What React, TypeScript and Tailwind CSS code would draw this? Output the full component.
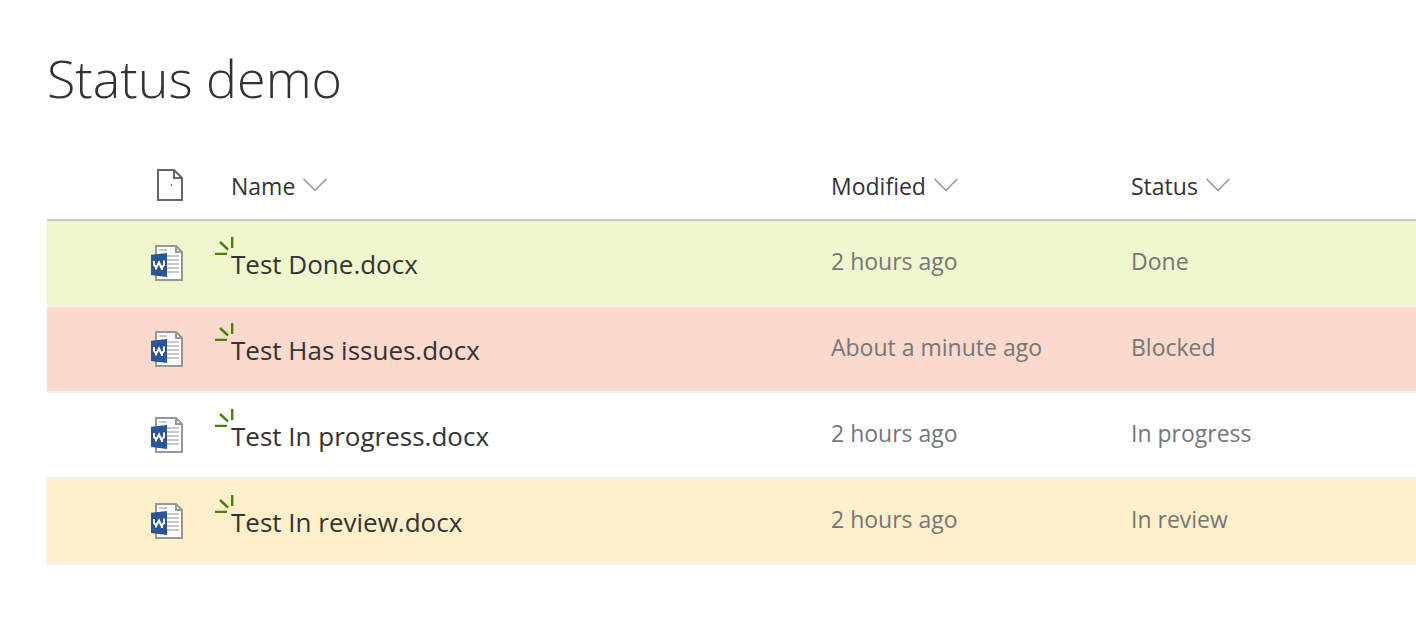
type Tone = 'done' | 'blocked' | 'plain' | 'review';

type Item = { name: string; modified: string; status: string; tone: Tone };

const items: Item[] = [
  { name: 'Test Done.docx', modified: '2 hours ago', status: 'Done', tone: 'done' },
  { name: 'Test Has issues.docx', modified: 'About a minute ago', status: 'Blocked', tone: 'blocked' },
  { name: 'Test In progress.docx', modified: '2 hours ago', status: 'In progress', tone: 'plain' },
  { name: 'Test In review.docx', modified: '2 hours ago', status: 'In review', tone: 'review' },
];

const toneClass: Record<Tone, string> = {
  done: 'bg-[#f0f7cf]',
  blocked: 'bg-[#fbd9cd]',
  plain: 'bg-white',
  review: 'bg-[#fff0cc]',
};

function FileTypeIcon() {
  return (
    <svg className="block" width="28" height="34" viewBox="0 0 28 34" fill="none" aria-hidden="true">
      <path d="M2 2H18L26 10V32H2Z" stroke="#666666" strokeWidth="2" />
      <path d="M18 2V10H26" stroke="#666666" strokeWidth="2" />
      <rect x="15" y="16" width="1" height="2" fill="#9a5a28" />
    </svg>
  );
}

function WordIcon() {
  return (
    <svg className="block" width="32" height="36" viewBox="0 0 32 36" fill="none" aria-hidden="true">
      <path d="M5 1H25L31 7V35H5Z" fill="#ffffff" stroke="#979797" strokeWidth="2" />
      <path d="M25 1V7H31" stroke="#979797" strokeWidth="2" />
      <path d="M8 5H16M16 11H28M16 15H28M16 19H28M16 23H28M16 27H28" stroke="#c8c8c8" strokeWidth="2" />
      <path d="M0 9.8L16 8V32L0 30Z" fill="#2a5699" />
      <path d="M3 16V20L5 22V24.5M5 23L8 17.5L10.5 23M11 25V22L13 20V15.5" stroke="#ffffff" strokeWidth="2" />
    </svg>
  );
}

function NewGlyph() {
  return (
    <svg className="absolute top-4 -left-4" width="19" height="18" viewBox="0 0 19 18" fill="none" aria-hidden="true">
      <path d="M17.2 0V11M5 5L13 12.5M0 17H12" stroke="#498205" strokeWidth="2.4" />
    </svg>
  );
}

function Chevron() {
  return (
    <svg className="-mt-0.5" width="24" height="14" viewBox="0 0 24 14" fill="none" aria-hidden="true">
      <path d="M0.5 0.8L12 12.3L23.5 0.8" stroke="#a0a0a0" strokeWidth="1.7" />
    </svg>
  );
}

function ColumnHeader({ label }: { label: string }) {
  return (
    <th scope="col" className="p-0 text-left align-middle font-normal">
      <button type="button" className="flex items-center gap-2 text-[23px] leading-8">
        {label}
        <Chevron />
      </button>
    </th>
  );
}

export default function App() {
  return (
    <main className="min-h-screen bg-white pt-11 pl-[47px] font-['Open_Sans','Noto_Sans',sans-serif] text-[#333333]">
      <h1 className="text-[52px] leading-[68px] font-light">Status demo</h1>
      <table className="mt-10 w-full table-fixed border-separate border-spacing-0">
        <colgroup>
          <col className="w-[184px]" />
          <col className="w-[600px]" />
          <col className="w-[300px]" />
          <col />
        </colgroup>
        <thead>
          <tr className="h-[69px] [&>th]:border-b-2 [&>th]:border-[#c8c8c8]">
            <th scope="col" aria-label="File type" className="p-0 pb-0.5 pl-[109px] align-middle">
              <FileTypeIcon />
            </th>
            <ColumnHeader label="Name" />
            <ColumnHeader label="Modified" />
            <ColumnHeader label="Status" />
          </tr>
        </thead>
        <tbody>
          {items.map((item) => (
            <tr key={item.name} className={`h-[86px] [&>td]:border-b-2 [&>td]:border-[#f1f1f1] ${toneClass[item.tone]}`}>
              <td className="p-0 pl-[104px] align-middle">
                <WordIcon />
              </td>
              <td className="relative p-0 pt-0.5 align-middle">
                <NewGlyph />
                <a href="#" className="text-[26px] leading-9">
                  {item.name}
                </a>
              </td>
              <td className="p-0 pb-1 align-middle text-[23px] leading-8 text-[#767676]">{item.modified}</td>
              <td className="p-0 pb-1 align-middle text-[23px] leading-8 text-[#767676]">{item.status}</td>
            </tr>
          ))}
        </tbody>
      </table>
    </main>
  );
}
